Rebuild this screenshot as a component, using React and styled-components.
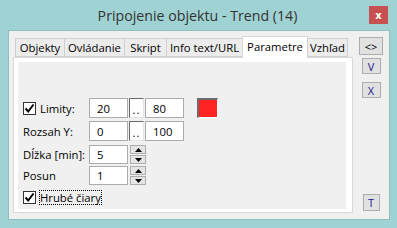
import React from "react";
import styled, { createGlobalStyle } from "styled-components";

const Global = createGlobalStyle`
  html, body { margin: 0; padding: 0; }
  body { width: 397px; height: 228px; overflow: hidden; background: #9fd2d3; }
`;

const Frame = styled.div`
  width: 397px;
  height: 228px;
  background: #9fd2d3;
  display: flex;
  flex-direction: column;
  font-family: "Open Sans", "Noto Sans", sans-serif;
  font-size: 11.3px;
  color: #000;
  box-sizing: border-box;
`;

const TitleBar = styled.div`
  height: 30px;
  position: relative;
  display: flex;
  align-items: center;
  justify-content: center;
`;

const Title = styled.div`
  font-size: 14.2px;
  color: #333;
  margin-left: -2px;
`;

const CloseBtn = styled.div`
  position: absolute;
  left: 369px;
  top: 6px;
  width: 19px;
  height: 18px;
  background: #c75050;
  color: #fff;
  font-family: "DejaVu Sans", sans-serif;
  font-weight: bold;
  font-size: 10px;
  display: flex;
  align-items: center;
  justify-content: center;
`;

const Client = styled.div`
  margin: 0 7px 8px 8px;
  height: 190px;
  background: #f0f0f0;
  border: 1px solid #8fbfbf;
  box-sizing: border-box;
  display: flex;
`;

const Left = styled.div`
  width: 345px;
  padding-left: 4px;
  padding-top: 5px;
  display: flex;
  flex-direction: column;
`;

const TabStrip = styled.div`
  display: flex;
  align-items: flex-end;
  height: 21px;
  padding-left: 2px;
  position: relative;
  z-index: 1;
`;

const Tab = styled.div`
  width: ${(p) => p.$w}px;
  height: ${(p) => (p.$active ? 22 : 19)}px;
  box-sizing: border-box;
  border: 1px solid ${(p) => (p.$active ? "#d9d9d9" : "#d0d0d0")};
  border-bottom: ${(p) => (p.$active ? "none" : "1px solid #d0d0d0")};
  margin-left: ${(p) => (p.$first ? 0 : -1)}px;
  background: ${(p) => (p.$active ? "#fff" : "#ececec")};
  display: flex;
  align-items: center;
  justify-content: center;
  padding-bottom: ${(p) => (p.$active ? 3 : 1)}px;
  white-space: nowrap;
  margin-bottom: ${(p) => (p.$active ? -1 : 0)}px;
`;

const Panel = styled.div`
  width: 340px;
  height: 156px;
  box-sizing: border-box;
  border: 1px solid #d9d9d9;
  background: #fff;
  padding: 4px 6px 3px 4px;
`;

const Inner = styled.div`
  background: #f0f0f0;
  height: 100%;
  padding-top: 36px;
  box-sizing: border-box;
  display: flex;
  flex-direction: column;
`;

const Row = styled.div`
  display: flex;
  align-items: center;
  height: ${(p) => p.$h || 20}px;
  margin-top: ${(p) => p.$mt || 0}px;
  padding-left: 5px;
`;

const Label = styled.div`
  width: 66px;
  display: flex;
  align-items: center;
  white-space: nowrap;
`;

const Check = styled.div`
  width: 13px;
  height: 13px;
  box-sizing: border-box;
  border: 1px solid #333;
  background: #fff;
  display: flex;
  align-items: center;
  justify-content: center;
  margin-right: 4px;
  flex: none;
`;

const Input = styled.div`
  width: 39px;
  height: ${(p) => p.$h || 20}px;
  box-sizing: border-box;
  border: 1px solid #ababab;
  background: #fff;
  padding-left: 7px;
  display: flex;
  align-items: center;
  flex: none;
`;

const DotsBtn = styled.div`
  width: 15px;
  height: 20px;
  box-sizing: border-box;
  margin-left: 1px;
  margin-right: 1px;
  border-top: 1px solid #696969;
  border-left: 1px solid #696969;
  border-right: 1px solid #e3e3e3;
  border-bottom: 1px solid #e3e3e3;
  background: #fff;
  display: flex;
  align-items: flex-end;
  justify-content: center;
  padding-bottom: 3px;
  font-size: 11px;
  line-height: 8px;
  letter-spacing: 1px;
`;

const ColorBox = styled.div`
  width: 21px;
  height: 20px;
  box-sizing: border-box;
  margin-left: 13px;
  border-top: 2px solid #6b6b6b;
  border-left: 2px solid #6b6b6b;
  border-right: 1px solid #fff;
  border-bottom: 1px solid #fff;
  background: #ff2222;
`;

const Spin = styled.div`
  margin-left: 2px;
  display: flex;
  flex-direction: column;
  gap: 1px;
`;

const SpinBtn = styled.div`
  width: 16px;
  height: 9px;
  box-sizing: border-box;
  border: 1px solid #adadad;
  background: #e5e5e5;
  display: flex;
  align-items: center;
  justify-content: center;
`;

const FocusText = styled.span`
  outline: 1px dotted #000;
  outline-offset: 0px;
  line-height: 13px;
`;

const Right = styled.div`
  flex: 1;
  display: flex;
  flex-direction: column;
  align-items: center;
  padding-top: 6px;
  padding-right: 5px;
`;

const SideBtn = styled.div`
  width: ${(p) => p.$w}px;
  height: ${(p) => p.$h}px;
  box-sizing: border-box;
  border: 1px solid #adadad;
  background: #e1e1e1;
  display: flex;
  align-items: center;
  justify-content: center;
  margin-top: ${(p) => p.$mt || 0}px;
  color: ${(p) => p.$c || "#000"};
  font-size: 11px;
`;

const Spacer = styled.div`
  flex: 1;
`;

const BottomGap = styled.div`
  height: 8px;
`;

const Tick = () => (
  <svg width="11" height="11" viewBox="0 0 11 11">
    <path d="M1.5 5.5 L4.2 8.5 L9.5 1.5" fill="none" stroke="#000" strokeWidth="2" />
  </svg>
);

const Arrow = ({ up }) => (
  <svg width="7" height="4" viewBox="0 0 7 4">
    <path d={up ? "M0 4 L3.5 0 L7 4 Z" : "M0 0 L3.5 4 L7 0 Z"} fill="#000" />
  </svg>
);

const tabs = [
  ["Objekty", 50],
  ["Ovládanie", 61],
  ["Skript", 43],
  ["Info text/URL", 77],
  ["Parametre", 66],
  ["Vzhľad", 41],
];

export default function App() {
  return (
    <>
      <Global />
      <Frame>
        <TitleBar>
          <Title>Pripojenie objektu - Trend (14)</Title>
          <CloseBtn>x</CloseBtn>
        </TitleBar>
        <Client>
          <Left>
            <TabStrip>
              {tabs.map(([t, w], i) => (
                <Tab key={t} $w={w} $first={i === 0} $active={t === "Parametre"}>
                  {t}
                </Tab>
              ))}
            </TabStrip>
            <Panel>
              <Inner>
                <Row>
                  <Label>
                    <Check>
                      <Tick />
                    </Check>
                    Limity:
                  </Label>
                  <Input>20</Input>
                  <DotsBtn>..</DotsBtn>
                  <Input>80</Input>
                  <ColorBox />
                </Row>
                <Row $mt={3}>
                  <Label>Rozsah Y:</Label>
                  <Input>0</Input>
                  <DotsBtn>..</DotsBtn>
                  <Input>100</Input>
                </Row>
                <Row $mt={4} $h={19}>
                  <Label>Dĺžka [min]:</Label>
                  <Input $h={19}>5</Input>
                  <Spin>
                    <SpinBtn><Arrow up /></SpinBtn>
                    <SpinBtn><Arrow /></SpinBtn>
                  </Spin>
                </Row>
                <Row $mt={2} $h={19}>
                  <Label>Posun</Label>
                  <Input $h={19}>1</Input>
                  <Spin>
                    <SpinBtn><Arrow up /></SpinBtn>
                    <SpinBtn><Arrow /></SpinBtn>
                  </Spin>
                </Row>
                <Row $mt={4} $h={16}>
                  <Check>
                    <Tick />
                  </Check>
                  <FocusText>Hrubé čiary</FocusText>
                </Row>
              </Inner>
            </Panel>
          </Left>
          <Right>
            <SideBtn $w={24} $h={18}>&lt;&gt;</SideBtn>
            <SideBtn $w={19} $h={16} $mt={3} $c="#1a1a8a">V</SideBtn>
            <SideBtn $w={19} $h={16} $mt={8} $c="#1a1a8a">X</SideBtn>
            <Spacer />
            <SideBtn $w={17} $h={17} $c="#1a1a8a">T</SideBtn>
            <BottomGap />
          </Right>
        </Client>
      </Frame>
    </>
  );
}
